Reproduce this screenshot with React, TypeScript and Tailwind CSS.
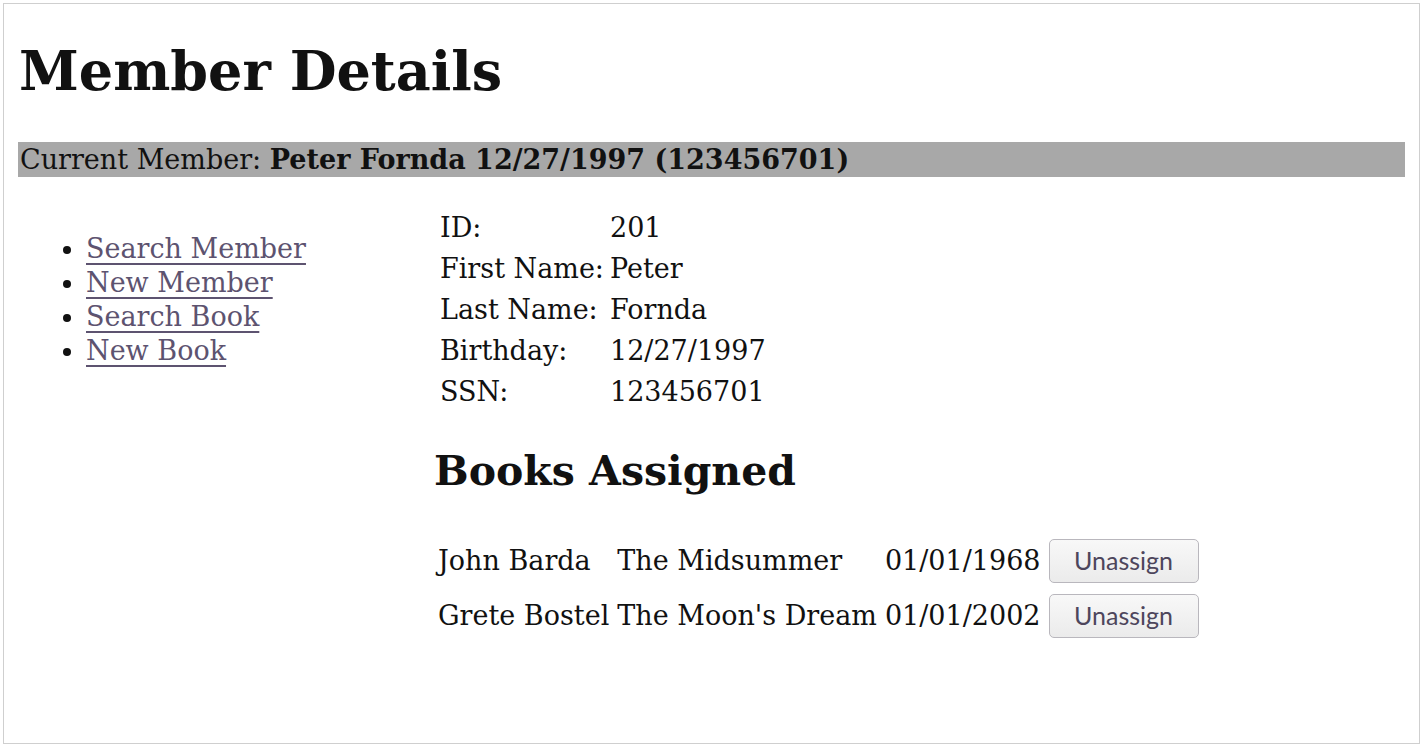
import React from 'react';

const member = {
  id: '201',
  firstName: 'Peter',
  lastName: 'Fornda',
  birthday: '12/27/1997',
  ssn: '123456701',
};

const books = [
  { author: 'John Barda', title: 'The Midsummer', date: '01/01/1968' },
  { author: 'Grete Bostel', title: "The Moon's Dream", date: '01/01/2002' },
];

const links = ['Search Member', 'New Member', 'Search Book', 'New Book'];

export default function App() {
  return (
    <div className="w-[1423px] h-[747px] bg-white p-[3px]">
      <div
        className="h-full border border-[#cfcfcf] px-[14px] text-[#111] text-[27px]"
        style={{ fontFamily: '"DejaVu Serif", serif' }}
      >
        <h1 className="text-[54px] font-bold leading-none pt-[40px] pl-[1px]">Member Details</h1>

        <div className="mt-[44px] h-[35px] bg-[#a8a8a8] text-[27px] leading-[35px] pl-[2px]">
          Current Member: <b>Peter Fornda 12/27/1997 (123456701)</b>
        </div>

        <div className="flex pt-[34px]">
          <div className="w-[420px] shrink-0">
            <ul className="list-disc pl-[68px] pt-[21px] leading-[34px]">
              {links.map((l) => (
                <li key={l}>
                  <a href="#" className="text-[#5d5370] underline underline-offset-[5px]">
                    {l}
                  </a>
                </li>
              ))}
            </ul>
          </div>

          <div>
            <table className="border-separate border-spacing-x-[2px] border-spacing-y-[8px] -mt-[8px]">
              <tbody>
                {[
                  ['ID:', member.id],
                  ['First Name:', member.firstName],
                  ['Last Name:', member.lastName],
                  ['Birthday:', member.birthday],
                  ['SSN:', member.ssn],
                ].map(([k, v]) => (
                  <tr key={k}>
                    <td className="leading-[33px] pr-[4px]">{k}</td>
                    <td className="leading-[33px]">{v}</td>
                  </tr>
                ))}
              </tbody>
            </table>

            <h2 className="text-[41px] font-bold leading-none mt-[35px] -ml-[4px]">Books Assigned</h2>

            <table className="border-separate border-spacing-x-[8px] border-spacing-y-[11px] mt-[36px] -ml-[8px]">
              <tbody>
                {books.map((b) => (
                  <tr key={b.author}>
                    <td className="whitespace-nowrap">{b.author}</td>
                    <td className="whitespace-nowrap">{b.title}</td>
                    <td className="whitespace-nowrap">{b.date}</td>
                    <td>
                      <button
                        className="h-[44px] w-[150px] rounded-[5px] border border-[#b9b7bd] bg-gradient-to-b from-[#f8f8f8] to-[#ebebeb] text-[25px] text-[#4d465c]"
                        style={{ fontFamily: 'Lato, "Open Sans", sans-serif' }}
                      >
                        Unassign
                      </button>
                    </td>
                  </tr>
                ))}
              </tbody>
            </table>
          </div>
        </div>
      </div>
    </div>
  );
}
